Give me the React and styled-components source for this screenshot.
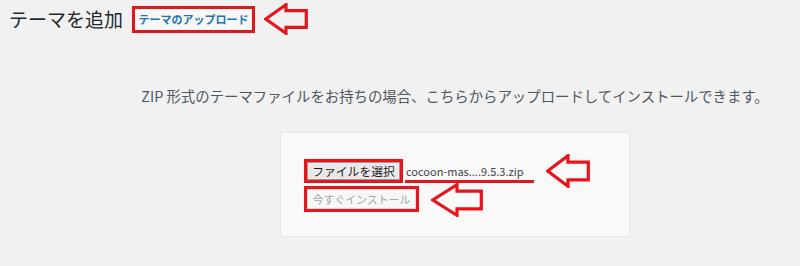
import React from "react";
import styled, { createGlobalStyle } from "styled-components";

const RED = "#e8141c";

const Global = createGlobalStyle`
  html, body { margin: 0; padding: 0; background: #f1f1f1; }
  body { font-family: "Noto Sans CJK JP", "Noto Sans", sans-serif; }
`;

const Page = styled.div`
  width: 800px;
  height: 266px;
  overflow: hidden;
  background: #f1f1f1;
`;

const Header = styled.div`
  display: flex;
  align-items: center;
  gap: 9px;
  padding: 3px 0 0 9px;
  height: 32px;
`;

const Title = styled.h1`
  margin: 0;
  font-size: 19px;
  font-weight: 400;
  line-height: 24px;
  color: #23282d;
`;

const Frame = styled.div`
  display: flex;
  box-sizing: border-box;
  border: 3px solid ${RED};
  width: ${(p) => p.$w}px;
  height: ${(p) => p.$h}px;
  flex: none;
`;

const ActionLink = styled.a`
  flex: 1;
  display: flex;
  align-items: center;
  justify-content: center;
  background: #f6f7f7;
  color: #1f72ad;
  font-size: 11px;
  font-weight: 700;
  text-decoration: none;
  line-height: 1;
  white-space: nowrap;
`;

const Main = styled.div`
  padding-left: 110px;
  text-align: center;
`;

const Help = styled.p`
  margin: 51px 0 0;
  font-size: 14.4px;
  line-height: 20px;
  color: #50575e;
  white-space: nowrap;
`;

const Card = styled.form`
  display: inline-flex;
  flex-direction: column;
  gap: 3px;
  box-sizing: border-box;
  width: 350px;
  margin-top: 26px;
  padding: 26px 0 24px 23px;
  background: #f9f9f9;
  border: 1px solid #e6e6e6;
  text-align: left;
`;

const Row = styled.div`
  display: flex;
  align-items: center;
  height: ${(p) => p.$h}px;
`;

const FileButton = styled.button`
  flex: 1;
  margin: 0;
  padding: 0 2px;
  background: #e9e9e9;
  border: 1px solid #9a9a9a;
  border-radius: 0;
  font-family: inherit;
  font-size: 11.8px;
  line-height: 1;
  color: #1b1b1b;
  white-space: nowrap;
`;

const FileName = styled.span`
  display: flex;
  align-items: center;
  box-sizing: border-box;
  height: 24px;
  margin-left: 2px;
  padding: 2px 10px 0 1px;
  border-bottom: 3px solid ${RED};
  font-size: 11px;
  color: #3c434a;
  white-space: nowrap;
`;

const InstallButton = styled.button`
  flex: 1;
  margin: 0;
  padding: 0 2px;
  background: #f6f7f7;
  border: 1px solid #dcdcde;
  border-radius: 0;
  font-family: inherit;
  font-size: 10.9px;
  line-height: 1;
  color: #a2a6aa;
  white-space: nowrap;
`;

const ArrowSvg = styled.svg`
  flex: none;
  display: block;
  margin: ${(p) => p.$m || "0"};
`;

function Arrow({ w, h, m }) {
  const s = 1.7;
  const hx = w * 0.5;
  const t = h * 0.24;
  const b = h * 0.76;
  const pts = [
    [s, h / 2],
    [hx, s],
    [hx, t],
    [w - s, t],
    [w - s, b],
    [hx, b],
    [hx, h - s],
  ]
    .map((p) => p.join(","))
    .join(" ");
  return (
    <ArrowSvg width={w} height={h} viewBox={`0 0 ${w} ${h}`} $m={m}>
      <polygon
        points={pts}
        fill="none"
        stroke={RED}
        strokeWidth="3.2"
        strokeLinejoin="miter"
      />
    </ArrowSvg>
  );
}

export default function App() {
  return (
    <Page>
      <Global />
      <Header>
        <Title>テーマを追加</Title>
        <Frame $w={123} $h={27}>
          <ActionLink href="#">テーマのアップロード</ActionLink>
        </Frame>
        <Arrow w={44} h={32} />
      </Header>
      <Main>
        <Help>ZIP 形式のテーマファイルをお持ちの場合、こちらからアップロードしてインストールできます。</Help>
        <Card onSubmit={(e) => e.preventDefault()}>
          <Row $h={24}>
            <Frame $w={99} $h={24}>
              <FileButton type="button">ファイルを選択</FileButton>
            </Frame>
            <FileName>cocoon-mas....9.5.3.zip</FileName>
            <Arrow w={44} h={34} m="-5px 0 -5px 12px" />
          </Row>
          <Row $h={26}>
            <Frame $w={115} $h={26}>
              <InstallButton type="button" disabled>今すぐインストール</InstallButton>
            </Frame>
            <Arrow w={52} h={34} m="-3px 0 -5px 12px" />
          </Row>
        </Card>
      </Main>
    </Page>
  );
}
